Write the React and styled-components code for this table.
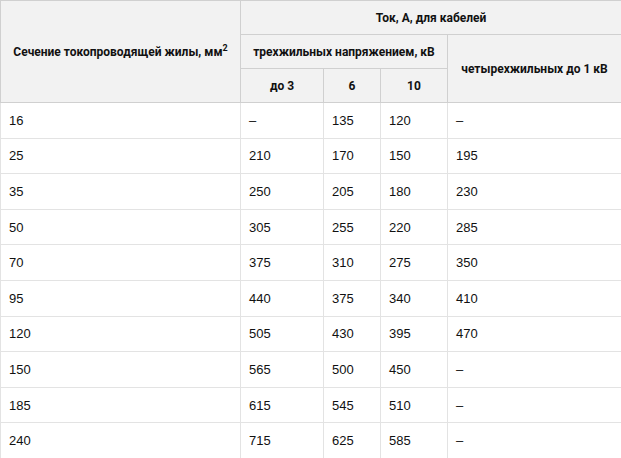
import React from "react";
import styled, { createGlobalStyle } from "styled-components";

const GlobalStyle = createGlobalStyle`
  html, body {
    margin: 0;
    padding: 0;
    background: #fff;
  }
`;

const Table = styled.table`
  width: 621px;
  border-collapse: collapse;
  table-layout: fixed;
  font-family: "Liberation Sans", Arial, sans-serif;
  font-size: 13px;
  color: #111;
`;

const HeadCell = styled.th`
  background: #f2f2f2;
  border: 1px solid #d0d0d0;
  font-family: Roboto, "Liberation Sans", sans-serif;
  font-weight: 700;
  font-size: 12px;
  color: #111;
  text-align: center;
  vertical-align: middle;
  height: ${(p) => p.$h || 33}px;
  padding: 0 6px;
  box-sizing: border-box;

  sup {
    font-size: 9px;
    line-height: 0;
  }
`;

const Row = styled.tr`
  height: 35.6px;
`;

const Cell = styled.td`
  border: 1px solid #e3e3e3;
  padding: 0 8px;
  vertical-align: middle;
  line-height: 15px;
`;

const rows = [
  ["16", "–", "135", "120", "–"],
  ["25", "210", "170", "150", "195"],
  ["35", "250", "205", "180", "230"],
  ["50", "305", "255", "220", "285"],
  ["70", "375", "310", "275", "350"],
  ["95", "440", "375", "340", "410"],
  ["120", "505", "430", "395", "470"],
  ["150", "565", "500", "450", "–"],
  ["185", "615", "545", "510", "–"],
  ["240", "715", "625", "585", "–"],
];

export default function App() {
  return (
    <>
      <GlobalStyle />
      <Table>
        <colgroup>
          <col style={{ width: 240 }} />
          <col style={{ width: 83 }} />
          <col style={{ width: 57 }} />
          <col style={{ width: 67 }} />
          <col style={{ width: 174 }} />
        </colgroup>
        <thead>
          <tr>
            <HeadCell rowSpan={3}>
              Сечение токопроводящей жилы, мм<sup>2</sup>
            </HeadCell>
            <HeadCell colSpan={4} $h={34}>Ток, А, для кабелей</HeadCell>
          </tr>
          <tr>
            <HeadCell colSpan={3} $h={34}>трехжильных напряжением, кВ</HeadCell>
            <HeadCell rowSpan={2}>четырехжильных до 1 кВ</HeadCell>
          </tr>
          <tr>
            <HeadCell $h={34}>до 3</HeadCell>
            <HeadCell $h={34}>6</HeadCell>
            <HeadCell $h={34}>10</HeadCell>
          </tr>
        </thead>
        <tbody>
          {rows.map((r) => (
            <Row key={r[0]}>
              {r.map((v, i) => (
                <Cell key={i}>{v}</Cell>
              ))}
            </Row>
          ))}
        </tbody>
      </Table>
    </>
  );
}
